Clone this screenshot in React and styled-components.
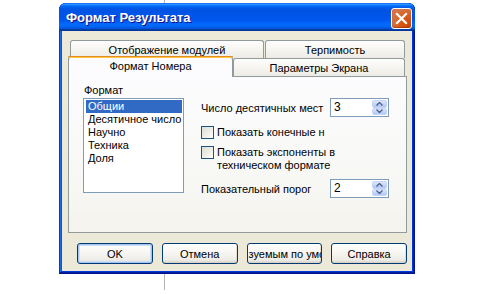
import React from 'react';
import styled, { createGlobalStyle } from 'styled-components';

const GlobalStyle = createGlobalStyle`
  html, body {
    margin: 0;
    padding: 0;
    background: #fff;
  }
  body {
    font-family: 'Liberation Sans', Arial, sans-serif;
    font-size: 11px;
    color: #000;
  }
`;

const formats = ['Общии', 'Десятичное число', 'Научно', 'Техника', 'Доля'];

export default function App() {
  return (
    <>
      <GlobalStyle />
      <Desktop>
        <GuideLine />
        <Window>
          <TitleBar>
            <Title>Формат Результата</Title>
            <CloseButton aria-label="close">
              <svg width="13" height="13" viewBox="0 0 13 13">
                <path d="M2 2 L11 11 M11 2 L2 11" stroke="#fff" strokeWidth="2.2" strokeLinecap="square" />
              </svg>
            </CloseButton>
          </TitleBar>
          <Client>
            <BackRow>
              <Tab $w={194}>Отображение модулей</Tab>
              <Tab $w={140}>Терпимость</Tab>
            </BackRow>
            <FrontRow>
              <ActiveTab $w={165}>Формат Номера</ActiveTab>
              <Tab $w={172}>Параметры Экрана</Tab>
            </FrontRow>
            <Panel>
              <LeftColumn>
                <GroupLabel>Формат</GroupLabel>
                <ListBox>
                  {formats.map((f, i) => (
                    <ListItem key={f} $selected={i === 0}>{f}</ListItem>
                  ))}
                </ListBox>
              </LeftColumn>
              <RightColumn>
                <SpinRow>
                  <span>Число десятичных мест</span>
                  <SpinBox value="3" />
                </SpinRow>
                <CheckRow $gap={9}>
                  <CheckBox />
                  <CheckText>Показать конечные н</CheckText>
                </CheckRow>
                <CheckRow $gap={7}>
                  <CheckBox />
                  <CheckText>
                    Показать экспоненты в
                    <br />
                    техническом формате
                  </CheckText>
                </CheckRow>
                <SpinRow $gap={7}>
                  <span>Показательный порог</span>
                  <SpinBox value="2" />
                </SpinRow>
              </RightColumn>
            </Panel>
            <ButtonRow>
              <Button $default>
                <span>OK</span>
              </Button>
              <Button>
                <span>Отмена</span>
              </Button>
              <Button $clipped>
                <span>зуемым по умо</span>
              </Button>
              <Button>
                <span>Справка</span>
              </Button>
            </ButtonRow>
          </Client>
        </Window>
      </Desktop>
    </>
  );
}

function SpinBox({ value }) {
  return (
    <SpinField>
      <SpinValue>{value}</SpinValue>
      <SpinButtons>
        <SpinButton>
          <svg width="7" height="4" viewBox="0 0 7 4">
            <path d="M0.5 3.5 L3.5 0.5 L6.5 3.5" fill="none" stroke="#4d6185" strokeWidth="1.4" />
          </svg>
        </SpinButton>
        <SpinButton>
          <svg width="7" height="4" viewBox="0 0 7 4">
            <path d="M0.5 0.5 L3.5 3.5 L6.5 0.5" fill="none" stroke="#4d6185" strokeWidth="1.4" />
          </svg>
        </SpinButton>
      </SpinButtons>
    </SpinField>
  );
}

const Desktop = styled.div`
  position: relative;
  width: 485px;
  height: 294px;
  box-sizing: border-box;
  overflow: hidden;
  padding: 3px 0 0 59px;
`;

const GuideLine = styled.div`
  position: absolute;
  left: 164px;
  top: 0;
  width: 1px;
  height: 290px;
  background: #b4b4b4;
`;

const Window = styled.div`
  position: relative;
  z-index: 1;
  width: 356px;
  height: 271px;
  box-sizing: border-box;
  display: flex;
  flex-direction: column;
  padding: 0 3px 3px;
  background: #0831d9;
  border-radius: 7px 7px 0 0;
  box-shadow: inset -1px -1px #00138c, inset 1px 1px #0831d9, inset -2px -2px #001ea0,
    inset 2px 2px #166aee, inset -3px -3px #003bda, inset 3px 3px #0855dd;
`;

const TitleBar = styled.div`
  height: 28px;
  margin: 0 -3px;
  padding: 0 3px 0 7px;
  box-sizing: border-box;
  display: flex;
  align-items: center;
  justify-content: space-between;
  border-radius: 7px 7px 0 0;
  background: linear-gradient(
    to bottom,
    #0058ee 0%,
    #3593ff 4%,
    #288eff 6%,
    #127dff 8%,
    #036ffc 10%,
    #0262ee 14%,
    #0057e5 20%,
    #0054e3 24%,
    #0055eb 56%,
    #005bf5 66%,
    #026afe 76%,
    #0062ef 86%,
    #0052d6 92%,
    #0040ab 94%,
    #003092 100%
  );
`;

const Title = styled.span`
  color: #fff;
  font-family: 'Liberation Sans', Arial, sans-serif;
  font-weight: 700;
  font-size: 13px;
  text-shadow: 1px 1px #0f1089;
`;

const CloseButton = styled.div`
  width: 21px;
  height: 21px;
  box-sizing: border-box;
  margin-top: 2px;
  display: flex;
  align-items: center;
  justify-content: center;
  border: 1px solid #fff;
  border-radius: 3px;
  background: radial-gradient(circle at 85% 85%, #cc4600 0%, #dc6527 55%, #cd7546 70%, #e86a45 100%);
  box-shadow: inset 0 -1px 1px rgba(120, 20, 0, 0.4);
`;

const Client = styled.div`
  flex: 1;
  display: flex;
  flex-direction: column;
  padding: 9px 5px 0 6px;
  background: #ece9d8;
`;

const BackRow = styled.div`
  display: flex;
  gap: 1px;
  height: 18px;
  padding-left: 2px;
`;

const FrontRow = styled.div`
  display: flex;
  align-items: flex-end;
  height: 20px;
  margin-top: -2px;
  position: relative;
  z-index: 2;
`;

const Tab = styled.div`
  width: ${(p) => p.$w}px;
  height: 18px;
  box-sizing: border-box;
  flex-shrink: 0;
  display: flex;
  align-items: center;
  justify-content: center;
  border: 1px solid #919b9c;
  border-bottom: none;
  border-radius: 3px 3px 0 0;
  background: linear-gradient(to bottom, #fefefe 0%, #f4f3ee 60%, #ecebe5 100%);
  white-space: nowrap;
`;

const ActiveTab = styled(Tab)`
  height: 21px;
  margin-bottom: -1px;
  padding-bottom: 2px;
  border-top: none;
  background: #fcfcfe;
  box-shadow: inset 0 2px #ffc73c;
  position: relative;

  &::before {
    content: '';
    position: absolute;
    left: -1px;
    right: -1px;
    top: 0;
    height: 1px;
    background: #e68b2c;
    border-radius: 3px 3px 0 0;
  }
`;

const Panel = styled.div`
  height: 157px;
  box-sizing: border-box;
  display: flex;
  gap: 17px;
  padding: 7px 0 0 14px;
  border: 1px solid #919b9c;
  background: linear-gradient(to bottom, #fcfcfe 0%, #f7f7f4 70%, #f4f3ee 100%);
`;

const LeftColumn = styled.div`
  display: flex;
  flex-direction: column;
  width: 101px;
`;

const GroupLabel = styled.div`
  line-height: 13px;
  padding-left: 1px;
  margin-bottom: 1px;
`;

const ListBox = styled.div`
  height: 95px;
  box-sizing: border-box;
  padding: 1px 1px 1px 2px;
  border: 1px solid #7f9db9;
  background: #fff;
`;

const ListItem = styled.div`
  line-height: 13px;
  padding-left: 2px;
  white-space: nowrap;
  background: ${(p) => (p.$selected ? '#316ac5' : 'transparent')};
  color: ${(p) => (p.$selected ? '#fff' : '#000')};
`;

const RightColumn = styled.div`
  display: flex;
  flex-direction: column;
  width: 188px;
  padding-top: 14px;
`;

const SpinRow = styled.div`
  display: grid;
  grid-template-columns: 129px 59px;
  align-items: center;
  margin-top: ${(p) => p.$gap || 0}px;
  white-space: nowrap;
`;

const SpinField = styled.div`
  height: 19px;
  box-sizing: border-box;
  display: flex;
  justify-content: space-between;
  border: 1px solid #7f9db9;
  background: #fff;
  padding: 1px;
`;

const SpinValue = styled.span`
  padding-left: 2px;
  line-height: 15px;
  font-size: 12px;
`;

const SpinButtons = styled.div`
  width: 15px;
  display: flex;
  flex-direction: column;
`;

const SpinButton = styled.div`
  flex: 1;
  display: flex;
  align-items: center;
  justify-content: center;
  border-radius: 2px;
  border: 1px solid #c6d5f7;
  background: linear-gradient(to bottom, #dde6fc 0%, #c1d3fb 60%, #b2c6f4 100%);
`;

const CheckRow = styled.div`
  display: flex;
  align-items: flex-start;
  gap: 3px;
  margin-top: ${(p) => p.$gap}px;
`;

const CheckBox = styled.div`
  width: 13px;
  height: 13px;
  box-sizing: border-box;
  flex-shrink: 0;
  border: 1px solid #1c5180;
  background: linear-gradient(135deg, #dcdcd7 0%, #f0f0ea 60%, #fff 100%);
`;

const CheckText = styled.span`
  line-height: 13px;
  white-space: nowrap;
`;

const ButtonRow = styled.div`
  display: flex;
  gap: 9px;
  margin-top: 10px;
  padding-left: 9px;
`;

const Button = styled.button`
  width: 76px;
  height: 21px;
  box-sizing: border-box;
  padding: ${(p) => (p.$clipped ? '0 0 0 1px' : '0')};
  display: flex;
  align-items: center;
  justify-content: ${(p) => (p.$clipped ? 'flex-start' : 'center')};
  overflow: hidden;
  white-space: nowrap;
  border: 1px solid #003c74;
  border-radius: 3px;
  font-family: 'Liberation Sans', Arial, sans-serif;
  font-size: 11px;
  color: #000;
  background: linear-gradient(to bottom, #ffffff 0%, #f7f6f2 45%, #ecebe6 85%, #d6d0c5 100%);
  box-shadow: ${(p) =>
    p.$default
      ? 'inset 0 0 0 1px #a6c2f0, inset 0 0 0 2px #cfdff8'
      : 'inset -1px -1px 0 rgba(214, 208, 197, 0.6)'};
`;
